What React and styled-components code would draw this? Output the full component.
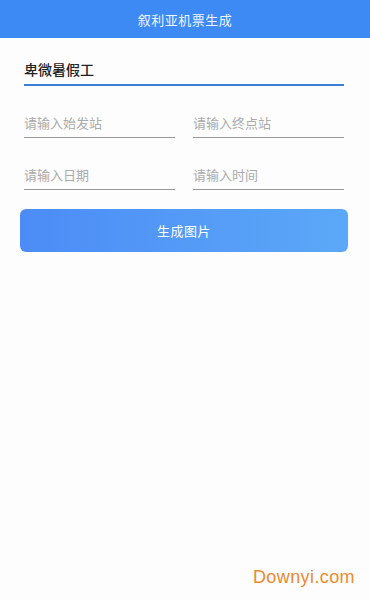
import React from 'react';
import styled, { createGlobalStyle } from 'styled-components';

const GlobalStyle = createGlobalStyle`
  html, body {
    margin: 0;
    padding: 0;
    background: #fdfdfd;
    font-family: "Noto Sans CJK SC", "Noto Sans", sans-serif;
  }
  * {
    box-sizing: border-box;
  }
`;

const Page = styled.div`
  width: 370px;
  height: 600px;
  background: #fdfdfd;
  display: flex;
  flex-direction: column;
`;

const Header = styled.div`
  height: 38px;
  background: #3d8af5;
  color: #eef5ff;
  font-size: 13px;
  display: flex;
  align-items: center;
  justify-content: center;
  letter-spacing: 0.5px;
`;

const Form = styled.div`
  padding: 16px 26px 0 24px;
  display: flex;
  flex-direction: column;
`;

const Field = styled.div`
  flex: 1;
  height: ${(p) => (p.$active ? 32 : 28)}px;
  padding-bottom: ${(p) => (p.$active ? 0 : 2)}px;
  border-bottom: ${(p) => (p.$active ? '2px solid #3b7fd9' : '1.5px solid #9a9a9a')};
  display: flex;
  align-items: center;
  font-size: ${(p) => (p.$active ? 14 : 13)}px;
  color: ${(p) => (p.$active ? '#222' : '#aaaaaa')};
  font-weight: ${(p) => (p.$active ? 500 : 400)};
`;

const Row = styled.div`
  display: flex;
  gap: 18px;
  margin-top: ${(p) => p.$top}px;
`;

const Button = styled.div`
  margin: 19px 22px 0 20px;
  height: 43px;
  border-radius: 6px;
  background: linear-gradient(90deg, #4c8cf6, #5ba8f8);
  color: #ffffff;
  font-size: 13px;
  display: flex;
  align-items: center;
  justify-content: center;
  letter-spacing: 0.5px;
`;

const Spacer = styled.div`
  flex: 1;
`;

const Watermark = styled.div`
  align-self: flex-end;
  margin: 0 15px 12px 0;
  font-family: "Liberation Sans", Arial, sans-serif;
  font-size: 18px;
  color: #ee8a2e;
  letter-spacing: 0.4px;
`;

export default function App() {
  return (
    <Page>
      <GlobalStyle />
      <Header>叙利亚机票生成</Header>
      <Form>
        <Row $top={0}>
          <Field $active>卑微暑假工</Field>
        </Row>
        <Row $top={24}>
          <Field>请输入始发站</Field>
          <Field>请输入终点站</Field>
        </Row>
        <Row $top={24}>
          <Field>请输入日期</Field>
          <Field>请输入时间</Field>
        </Row>
      </Form>
      <Button>生成图片</Button>
      <Spacer />
      <Watermark>Downyi.com</Watermark>
    </Page>
  );
}
